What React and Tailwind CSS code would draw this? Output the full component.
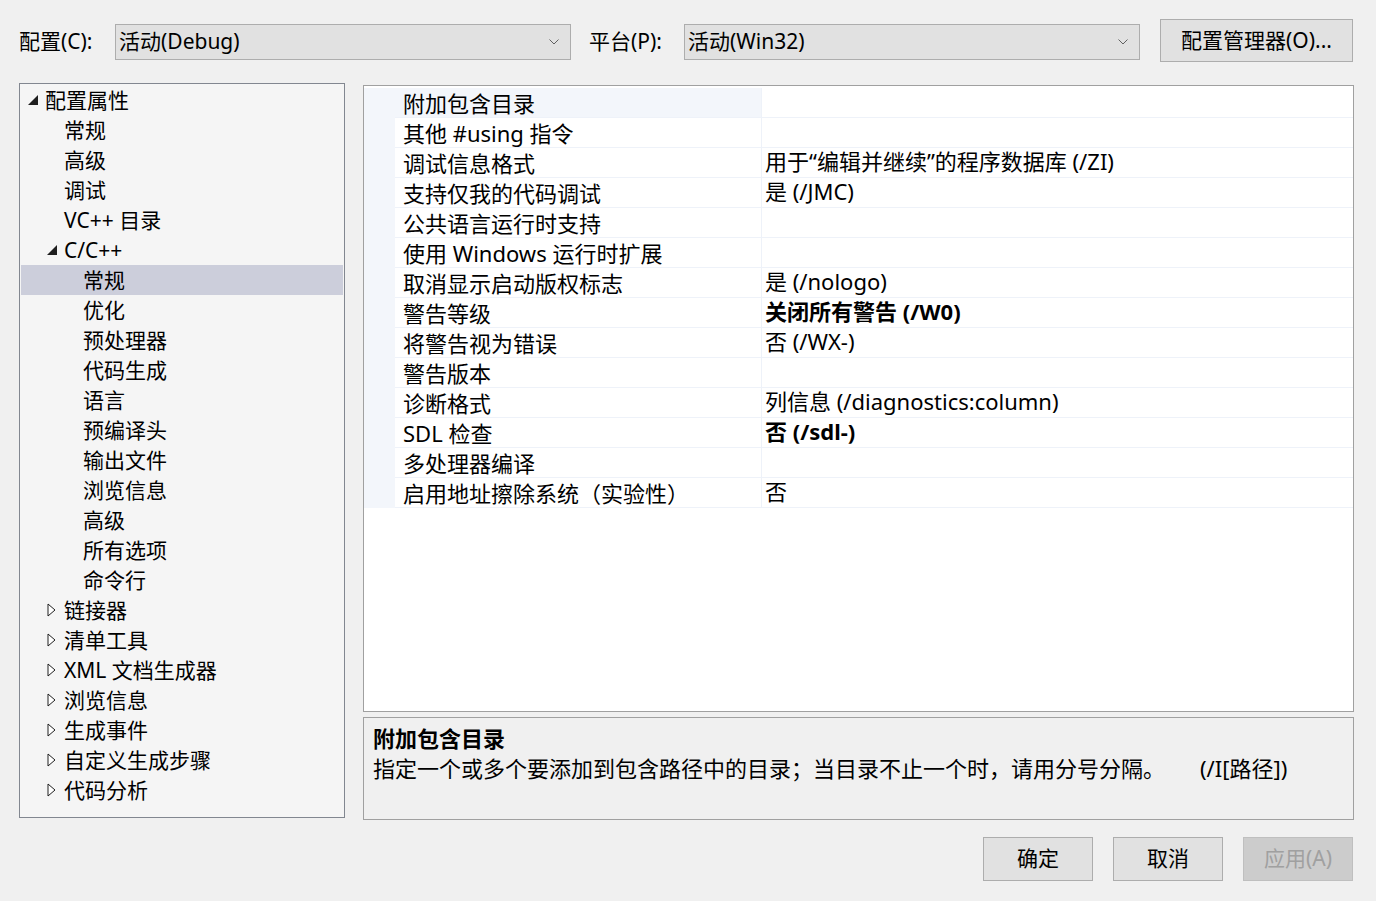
const FONT = { fontFamily: '"Segoe UI", "Noto Sans", "Noto Sans CJK SC", sans-serif' }

const treeItems = [
  { label: '配置属性', level: 0, icon: 'open' },
  { label: '常规', level: 1 },
  { label: '高级', level: 1 },
  { label: '调试', level: 1 },
  { label: 'VC++ 目录', level: 1 },
  { label: 'C/C++', level: 1, icon: 'open' },
  { label: '常规', level: 2, selected: true },
  { label: '优化', level: 2 },
  { label: '预处理器', level: 2 },
  { label: '代码生成', level: 2 },
  { label: '语言', level: 2 },
  { label: '预编译头', level: 2 },
  { label: '输出文件', level: 2 },
  { label: '浏览信息', level: 2 },
  { label: '高级', level: 2 },
  { label: '所有选项', level: 2 },
  { label: '命令行', level: 2 },
  { label: '链接器', level: 1, icon: 'closed' },
  { label: '清单工具', level: 1, icon: 'closed' },
  { label: 'XML 文档生成器', level: 1, icon: 'closed' },
  { label: '浏览信息', level: 1, icon: 'closed' },
  { label: '生成事件', level: 1, icon: 'closed' },
  { label: '自定义生成步骤', level: 1, icon: 'closed' },
  { label: '代码分析', level: 1, icon: 'closed' },
]

const props = [
  ['附加包含目录', ''],
  ['其他 #using 指令', ''],
  ['调试信息格式', '用于“编辑并继续”的程序数据库 (/ZI)'],
  ['支持仅我的代码调试', '是 (/JMC)'],
  ['公共语言运行时支持', ''],
  ['使用 Windows 运行时扩展', ''],
  ['取消显示启动版权标志', '是 (/nologo)'],
  ['警告等级', '关闭所有警告 (/W0)', true],
  ['将警告视为错误', '否 (/WX-)'],
  ['警告版本', ''],
  ['诊断格式', '列信息 (/diagnostics:column)'],
  ['SDL 检查', '否 (/sdl-)', true],
  ['多处理器编译', ''],
  ['启用地址擦除系统（实验性）', '否'],
]

const Chevron = () => (
  <svg width="10" height="6" viewBox="0 0 10 6" className="shrink-0">
    <path d="M0.5 0.5 L5 5 L9.5 0.5" fill="none" stroke="#606060" strokeWidth="1" />
  </svg>
)

const Select = ({ value }) => (
  <div className="flex h-[36px] w-[456px] items-center justify-between border border-[#adadad] bg-[#e1e1e1] pl-[3px] pr-[11px] text-[21px]">
    <span>{value}</span>
    <Chevron />
  </div>
)

const TreeIcon = ({ kind }) => {
  if (kind === 'open')
    return (
      <svg width="10" height="10" viewBox="0 0 10 10">
        <path d="M10 0 L10 10 L0 10 Z" fill="#1e1e1e" />
      </svg>
    )
  if (kind === 'closed')
    return (
      <svg width="9" height="14" viewBox="0 0 9 14">
        <path d="M1 1 L8 7 L1 13 Z" fill="#fff" stroke="#1e1e1e" strokeWidth="1" />
      </svg>
    )
  return null
}

const Button = ({ children, disabled, className = '' }) => (
  <div
    className={`flex items-center justify-center border text-[21px] ${
      disabled ? 'border-[#bfbfbf] bg-[#cccccc] text-[#a0a0a0]' : 'border-[#adadad] bg-[#e1e1e1] text-black'
    } ${className}`}
  >
    {children}
  </div>
)

export default function App() {
  return (
    <div style={FONT} className="flex h-[901px] w-[1376px] flex-col bg-[#f0f0f0] px-[19px] text-black">
      {/* config bar */}
      <div className="mt-[19px] flex h-[43px] items-center">
        <span className="mt-[3px] w-[96px] text-[21px]">配置(C):</span>
        <div className="mt-[3px]"><Select value="活动(Debug)" /></div>
        <span className="mt-[3px] ml-[18px] w-[95px] text-[21px]">平台(P):</span>
        <div className="mt-[3px]"><Select value="活动(Win32)" /></div>
        <Button className="ml-[20px] h-[43px] w-[193px]">配置管理器(O)...</Button>
      </div>

      <div className="mt-[21px] flex">
        {/* tree */}
        <div className="h-[735px] w-[326px] border border-[#828790] bg-[#f5f5f5] px-[1px] pt-[1px]">
          {treeItems.map((it, i) => (
            <div
              key={i}
              className={`flex h-[30px] items-center text-[21px] leading-[30px] ${it.selected ? 'bg-[#cccedb]' : ''}`}
            >
              <div
                className={`flex items-center justify-start ${
                  it.level === 0 ? 'w-[24px] pl-[7px]' : it.level === 1 ? 'w-[43px] pl-[26px]' : 'w-[62px]'
                }`}
              >
                <TreeIcon kind={it.icon} />
              </div>
              <span>{it.label}</span>
            </div>
          ))}
        </div>

        {/* right side */}
        <div className="ml-[18px] flex w-[991px] flex-col">
          <div className="mt-[2px] h-[627px] border border-[#a0a0a0] bg-white pt-[2px]">
            {props.map(([name, value, bold], i) => (
              <div key={i} className="flex h-[30px] text-[22px] leading-[30px]">
                <div className="w-[31px] shrink-0 bg-[#f3f6fb]" />
                <div
                  className={`w-[367px] shrink-0 border-b border-r border-[#eef2f9] pl-[8px] ${
                    i === 0 ? 'bg-[#f3f6fb]' : ''
                  }`}
                >
                  {name}
                </div>
                <div className={`flex-1 border-b border-[#eef2f9] pl-[3px] leading-[26px] ${bold ? 'font-bold' : ''}`}>{value}</div>
              </div>
            ))}
          </div>

          <div className="mt-[5px] h-[103px] border border-[#a0a0a0] bg-[#f0f0f0] px-[9px] pt-[5px] text-[22px] leading-[30px]">
            <div className="font-bold">附加包含目录</div>
            <div className="flex">
              <span>指定一个或多个要添加到包含路径中的目录；当目录不止一个时，请用分号分隔。</span>
              <span className="ml-[35px]">(/I[路径])</span>
            </div>
          </div>
        </div>
      </div>

      {/* buttons */}
      <div className="mt-[17px] flex justify-end gap-[20px] pr-[4px]">
        <Button className="h-[44px] w-[110px]">确定</Button>
        <Button className="h-[44px] w-[110px]">取消</Button>
        <Button disabled className="h-[44px] w-[110px]">应用(A)</Button>
      </div>
    </div>
  )
}
